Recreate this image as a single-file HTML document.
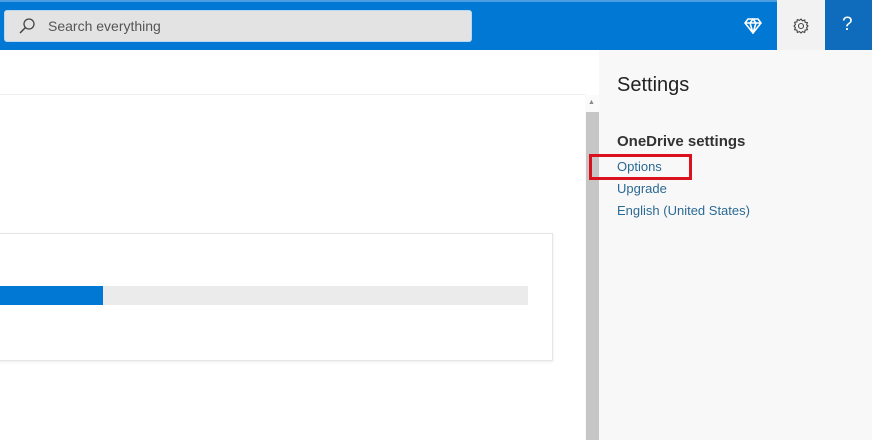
<!DOCTYPE html><html><head><style>
body{margin:0;width:872px;height:440px;overflow:hidden;background:#fff;font-family:"Liberation Sans",sans-serif;position:relative}
div{position:absolute;box-sizing:border-box}
</style></head><body>
<div style="left:0;top:0;width:872px;height:50px;background:#0078d4"></div>
<div style="left:0;top:0;width:872px;height:2px;background:#4a9ee0"></div>
<div style="left:4px;top:10px;width:468px;height:32px;background:#e3e3e3;border:1px solid #b8d8f2;border-radius:3px"></div>
<svg style="position:absolute;left:18px;top:17px" width="18" height="18" viewBox="0 0 18 18"><circle cx="11" cy="7" r="5" fill="none" stroke="#444" stroke-width="1.3"/><path d="M7.5 10.5L2 16" stroke="#444" stroke-width="1.5"/></svg>
<div style="left:48px;top:18px;font-size:14px;color:#555">Search everything</div>
<svg style="position:absolute;left:744px;top:18px" width="18" height="16" viewBox="0 0 18 16"><path d="M4 1h10l3 4-8 10-8-10z M1 5h16 M9 15L6 5l3-4 3 4z" fill="none" stroke="#fff" stroke-width="1.6"/></svg>
<div style="left:777px;top:0;width:48px;height:50px;background:#f2f2f2"></div>
<svg style="position:absolute;left:792px;top:17px" width="18" height="18" viewBox="0 0 18 18"><circle cx="9" cy="9" r="2.5" fill="none" stroke="#444" stroke-width="1.1"/><path d="M9 2l1.5 1.8 2.2-.8.4 2.3 2.3.4-.8 2.2L16 9l-1.4 1.5.8 2.2-2.3.4-.4 2.3-2.2-.8L9 16l-1.5-1.4-2.2.8-.4-2.3-2.3-.4.8-2.2L2 9l1.4-1.5-.8-2.2 2.3-.4.4-2.3 2.2.8z" fill="none" stroke="#444" stroke-width="1.1"/></svg>
<div style="left:825px;top:0;width:47px;height:50px;background:#0f6cbd"></div>
<div style="left:842px;top:14px;font-size:19px;color:#fff">?</div>
<div style="left:0;top:94px;width:585px;height:1px;background:#eee"></div>
<div style="left:585px;top:95px;width:14px;height:345px;background:#fafafa"></div>
<div style="left:588px;top:99px;font-size:7px;color:#888">▲</div>
<div style="left:586px;top:112px;width:13px;height:328px;background:#c6c6c6"></div>
<div style="left:-2px;top:233px;width:555px;height:128px;border:1px solid #e6e6e6;box-shadow:0 1px 3px rgba(0,0,0,.08);background:#fff"></div>
<div style="left:0;top:286px;width:528px;height:19px;background:#ebebeb"></div>
<div style="left:0;top:286px;width:103px;height:19px;background:#0078d4"></div>
<div style="left:599px;top:50px;width:273px;height:390px;background:#f8f8f8"></div>
<div style="left:617px;top:74px;font-size:20px;color:#222">Settings</div>
<div style="left:617px;top:133px;font-size:15px;font-weight:bold;color:#333">OneDrive settings</div>
<div style="left:617px;top:159px;font-size:13px;color:#2b6a94">Options</div>
<div style="left:617px;top:181px;font-size:13px;color:#2b6a94">Upgrade</div>
<div style="left:617px;top:203px;font-size:13px;color:#2b6a94">English (United States)</div>
<div style="left:589px;top:154px;width:103px;height:26px;border:3px solid #d9121e"></div>
</body></html>
